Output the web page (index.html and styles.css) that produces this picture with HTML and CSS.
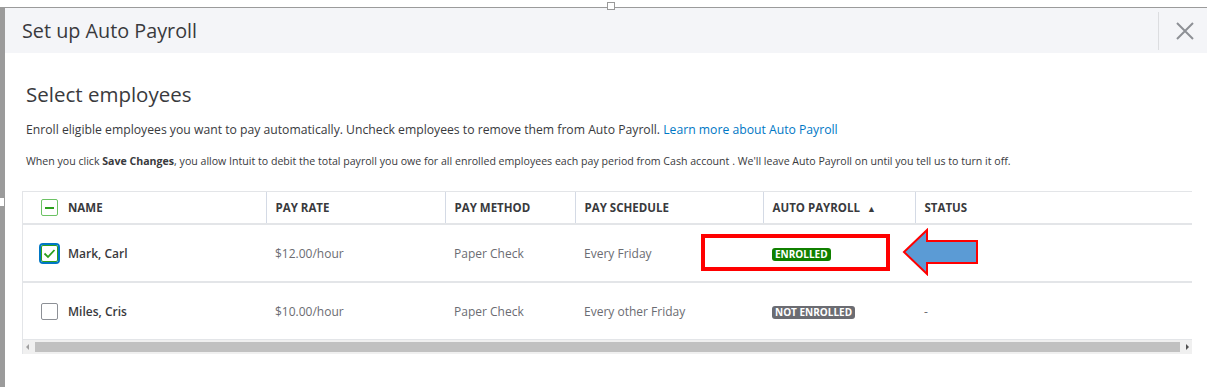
FILE: index.html
```html
<!DOCTYPE html>
<html lang="en">
<head>
    <meta charset="UTF-8">
    <title>Set up Auto Payroll</title>
    <link rel="stylesheet" href="styles.css">
</head>
<body>

<span class="handle handle-top"></span>
<span class="handle handle-left"></span>

<div class="window">
    <div class="modal-header">
        <h1>Set up Auto Payroll</h1>
        <button class="close" aria-label="Close">
            <svg width="18" height="18" viewBox="0 0 18 18"><path d="M1 1 L17 17 M17 1 L1 17" stroke="#8d9096" stroke-width="2" fill="none"/></svg>
        </button>
    </div>

    <div class="modal-body">
        <h2>Select employees</h2>
        <p class="intro">Enroll eligible employees you want to pay automatically. Uncheck employees to remove them from Auto Payroll. <a href="#">Learn more about Auto Payroll</a></p>
        <p class="note">When you click <b>Save Changes</b>, you allow Intuit to debit the total payroll you owe for all enrolled employees each pay period from Cash account . We'll leave Auto Payroll on until you tell us to turn it off.</p>

        <div class="table-wrap">
            <table class="employees">
                <colgroup>
                    <col style="width:243px">
                    <col style="width:179px">
                    <col style="width:130px">
                    <col style="width:188px">
                    <col style="width:152px">
                    <col>
                </colgroup>
                <thead>
                    <tr>
                        <th><span class="name-cell"><span class="check partial"></span>NAME</span></th>
                        <th>PAY RATE</th>
                        <th>PAY METHOD</th>
                        <th>PAY SCHEDULE</th>
                        <th>AUTO PAYROLL <span class="sort">&#9650;</span></th>
                        <th>STATUS</th>
                    </tr>
                </thead>
                <tbody>
                    <tr>
                        <td><span class="name-cell"><span class="check checked">
                            <svg width="13" height="11" viewBox="0 0 13 11"><path d="M1.5 5.5 L5 9 L11.5 2" stroke="#2ca01c" stroke-width="1.8" fill="none"/></svg>
                        </span><span class="emp">Mark, Carl</span></span></td>
                        <td>$12.00/hour</td>
                        <td>Paper Check</td>
                        <td>Every Friday</td>
                        <td><span class="badge enrolled">ENROLLED</span></td>
                        <td></td>
                    </tr>
                    <tr>
                        <td><span class="name-cell"><span class="check"></span><span class="emp">Miles, Cris</span></span></td>
                        <td>$10.00/hour</td>
                        <td>Paper Check</td>
                        <td>Every other Friday</td>
                        <td><span class="badge not-enrolled">NOT ENROLLED</span></td>
                        <td>-</td>
                    </tr>
                </tbody>
            </table>

            <div class="hscroll">
                <span class="arrow left"></span>
                <span class="thumb"></span>
                <span class="arrow right"></span>
            </div>

            <span class="callout-box"></span>
            <svg class="callout-arrow" width="78" height="48" viewBox="0 0 78 48">
                <polygon points="2,24 25,2 25,13 75,13 75,35 25,35 25,46" fill="#5b9bd5" stroke="#ff0000" stroke-width="2"/>
            </svg>
        </div>
    </div>
</div>

</body>
</html>
```

FILE: styles.css
```css
body {
    margin: 0;
    padding-top: 7px;
    font-family: "Open Sans", "Liberation Sans", sans-serif;
    color: #393a3d;
    background: #fff;
    height: 380px;
    overflow: hidden;
}

.handle {
    position: absolute;
    background: #fff;
    border: 1px solid #999;
}

.handle-top {
    left: 607px;
    top: 2px;
    width: 6px;
    height: 6px;
}

.handle-left {
    left: -4px;
    top: 198px;
    width: 6px;
    height: 6px;
    border-color: #fff;
}

.window {
    border-top: 1px solid #9b9b9b;
    border-left: 5px solid #9b9b9b;
    height: 380px;
}

.modal-header {
    background: #f4f5f8;
    height: 45px;
    display: flex;
    align-items: center;
    justify-content: space-between;
}

.modal-header h1 {
    margin: 0 0 0 17px;
    font-size: 19.8px;
    font-weight: 400;
    color: #393a3d;
}

.close {
    border: none;
    border-left: 1px solid #dcdde0;
    background: transparent;
    height: 38px;
    width: 49px;
    padding: 0 0 0 4px;
    display: flex;
    align-items: center;
    justify-content: center;
}

.modal-body {
    padding: 27px 15px 0 17px;
}

.modal-body h2 {
    margin: 0 0 0 4px;
    font-size: 20.5px;
    font-weight: 500;
    line-height: 28px;
}

.intro {
    margin: 13px 0 0 4px;
    font-size: 12.2px;
    line-height: 18px;
}

.intro a {
    color: #0077c5;
    text-decoration: none;
}

.note {
    margin: 15px 0 0 4px;
    font-size: 10.6px;
    line-height: 14px;
}

.note b {
    font-weight: 700;
}

.table-wrap {
    position: relative;
    margin-top: 23px;
    border-left: 1px solid #e3e5e8;
}

.employees {
    width: 100%;
    border-collapse: collapse;
    table-layout: fixed;
    font-size: 12px;
}

.employees th {
    text-align: left;
    font-weight: 700;
    font-size: 11.5px;
    height: 31px;
    padding: 0 0 0 9px;
    border-top: 1px solid #e3e5e8;
    border-bottom: 2px solid #e3e5e8;
    border-left: 1px solid #d4dae5;
    color: #393a3d;
}

.employees th:first-child,
.employees td:first-child {
    border-left: none;
    padding-left: 18px;
}

.employees td {
    height: 56px;
    padding: 0 0 0 9px;
    border-bottom: 2px solid #e3e5e8;
    color: #6b6c72;
}

.name-cell {
    display: flex;
    align-items: center;
    gap: 10px;
}

.emp {
    color: #393a3d;
    font-weight: 600;
}

.sort {
    font-size: 9px;
    margin-left: 4px;
}

.check {
    width: 15px;
    height: 15px;
    border: 1px solid #8d9096;
    border-radius: 2px;
    display: flex;
    align-items: center;
    justify-content: center;
    box-sizing: content-box;
}

.check.partial {
    border-color: #6cc264;
}

.check.partial::after {
    content: "";
    width: 9px;
    height: 2px;
    background: #2ca01c;
}

.check.checked {
    border: 1px solid #2ca01c;
    outline: 2px solid #0077c5;
    outline-offset: 0;
    border-radius: 2px;
}

.badge {
    display: inline-block;
    font-size: 10px;
    font-weight: 700;
    color: #fff;
    padding: 0 3px;
    line-height: 13px;
    border-radius: 3px;
}

.badge.enrolled {
    background: #108000;
}

.badge.not-enrolled {
    background: #6b6c72;
}

.hscroll {
    display: flex;
    align-items: center;
    height: 14px;
    background: #f0f0f0;
    margin-top: -1px;
}

.hscroll .thumb {
    flex: 1;
    height: 10px;
    background: #c1c1c1;
    margin: 0 3px;
}

.hscroll .arrow {
    width: 0;
    height: 0;
    border-top: 3px solid transparent;
    border-bottom: 3px solid transparent;
    margin: 0 3px;
}

.hscroll .arrow.left {
    border-right: 3px solid #a0a0a0;
}

.hscroll .arrow.right {
    border-left: 3px solid #505050;
}

.callout-box {
    position: absolute;
    left: 678px;
    top: 43px;
    width: 181px;
    height: 29px;
    border: 4px solid #ff0000;
}

.callout-arrow {
    position: absolute;
    left: 879px;
    top: 37px;
}
```
